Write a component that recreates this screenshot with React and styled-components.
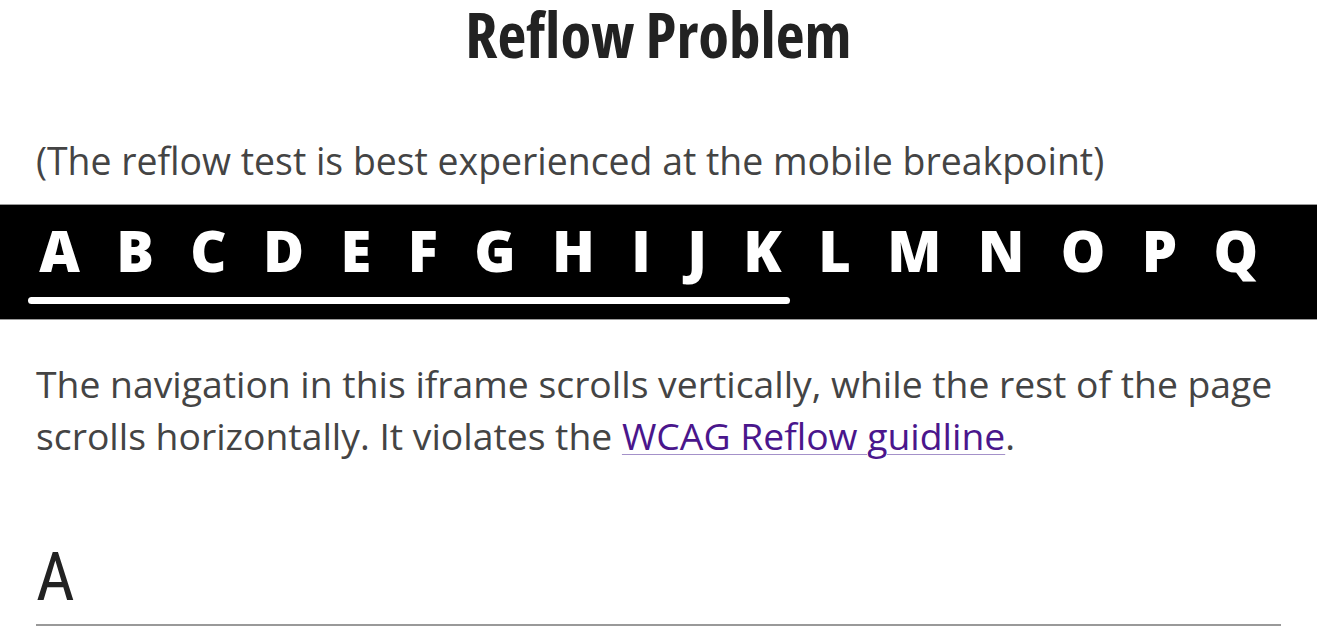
import React from 'react'
import styled, { createGlobalStyle } from 'styled-components'

const GlobalStyle = createGlobalStyle`
  html, body {
    margin: 0;
    padding: 0;
    background: #fff;
    overflow: hidden;
  }
  body {
    font-family: "Open Sans", "Liberation Sans", sans-serif;
    color: #444;
  }
`;

const Page = styled.div`
  width: 1317px;
  height: 630px;
  overflow: hidden;
`;

const Title = styled.h1`
  margin: 0;
  text-align: center;
  font-family: "Open Sans", "Roboto", sans-serif;
  font-stretch: 75%;
  font-weight: 700;
  font-size: 63px;
  line-height: 68px;
  color: #222;
`;

const Section = styled.div`
  padding: 0 36px;
`;

const Note = styled.p`
  margin: 68.5px 0 19.5px;
  font-size: 37.4px;
  line-height: 48px;
  color: #444;
`;

const NavBar = styled.nav`
  position: relative;
  height: 116px;
  background: #000;
  border-top: 1px solid #9a9a9a;
  border-bottom: 1px solid #9a9a9a;
  box-sizing: border-box;
`;

const LetterList = styled.ul`
  display: flex;
  margin: 0;
  padding: 7px 0 0 21px;
  list-style: none;
`;

const Letter = styled.li`
  a {
    display: block;
    padding: 0 18.2px;
    font-family: "Open Sans", "Liberation Sans", sans-serif;
    font-weight: 800;
    font-size: 56px;
    line-height: 76px;
    color: #fff;
    text-decoration: none;
  }
`;

const ScrollThumb = styled.div`
  position: absolute;
  left: 28px;
  top: 92px;
  width: 762px;
  height: 7px;
  border-radius: 4px;
  background: #fff;
`;

const Body = styled.p`
  margin: 37.5px 0 0;
  font-size: 37.3px;
  line-height: 52px;
  color: #444;
`;

const Link = styled.a`
  color: #4a168c;
  text-decoration: underline;
  text-decoration-color: #a491c9;
  text-decoration-thickness: 1px;
  text-underline-offset: 4px;
`;

const LetterHeading = styled.h2`
  margin: 75.5px 0 0;
  padding-bottom: 7px;
  font-family: "Roboto", "Open Sans", sans-serif;
  font-stretch: condensed;
  font-weight: 400;
  font-size: 67px;
  line-height: 80px;
  color: #222;
  border-bottom: 2px solid #999;
`;

const letters = 'ABCDEFGHIJKLMNOPQ'.split('');

function App() {
  return (
    <Page>
      <GlobalStyle />
      <Title>Reflow Problem</Title>
      <Section>
        <Note>(The reflow test is best experienced at the mobile breakpoint)</Note>
      </Section>
      <NavBar>
        <LetterList>
          {letters.map(l => (
            <Letter key={l}><a href={'#' + l}>{l}</a></Letter>
          ))}
        </LetterList>
        <ScrollThumb />
      </NavBar>
      <Section>
        <Body>
          The navigation in this iframe scrolls vertically, while the rest of the page
          scrolls horizontally. It violates the <Link href="#">WCAG Reflow guidline</Link>.
        </Body>
        <LetterHeading>A</LetterHeading>
      </Section>
    </Page>
  )
}

export default App
